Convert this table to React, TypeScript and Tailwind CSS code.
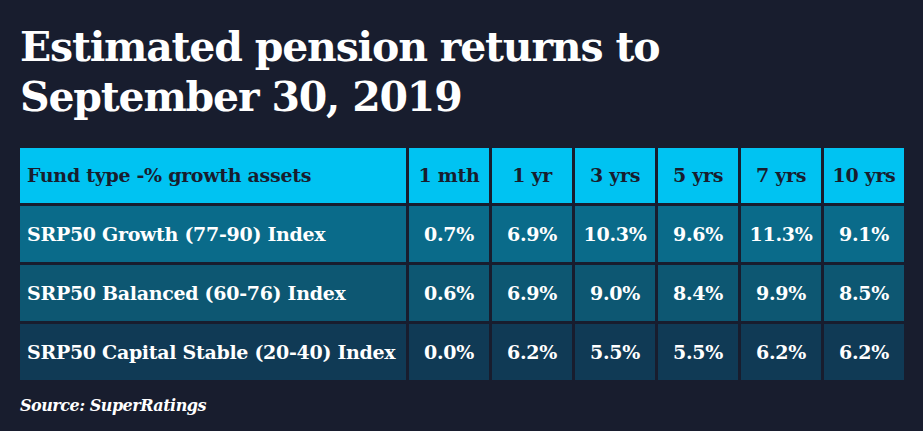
import React from 'react';

const rows = [
  { name: 'SRP50 Growth (77-90) Index', values: ['0.7%', '6.9%', '10.3%', '9.6%', '11.3%', '9.1%'], bg: 'bg-[#0a6b8a]' },
  { name: 'SRP50 Balanced (60-76) Index', values: ['0.6%', '6.9%', '9.0%', '8.4%', '9.9%', '8.5%'], bg: 'bg-[#0d5772]' },
  { name: 'SRP50 Capital Stable (20-40) Index', values: ['0.0%', '6.2%', '5.5%', '5.5%', '6.2%', '6.2%'], bg: 'bg-[#103a55]' },
];

const periods = ['1 mth', '1 yr', '3 yrs', '5 yrs', '7 yrs', '10 yrs'];

export default function App() {
  return (
    <div
      className="w-[923px] h-[431px] bg-[#181d2e] text-white overflow-hidden"
      style={{ fontFamily: '"DejaVu Serif", serif' }}
    >
      <div className="pl-[20px] pr-[20px] pt-[22px]">
        <h1 className="text-[41px] leading-[50px] font-bold tracking-[-1.2px]">
          Estimated pension returns to
          <br />
          September 30, 2019
        </h1>

        <div className="mt-[26px] grid grid-cols-[386px_repeat(6,80px)] gap-[3px] text-[19px] font-bold tracking-[-0.3px]">
          <div className="h-[55px] bg-[#00c3f2] text-[#181d2e] flex items-center pl-[7px]">
            Fund type -% growth assets
          </div>
          {periods.map((p) => (
            <div key={p} className="h-[55px] bg-[#00c3f2] text-[#181d2e] flex items-center justify-center">
              {p}
            </div>
          ))}

          {rows.map((r) => (
            <React.Fragment key={r.name}>
              <div className={`h-[56px] ${r.bg} flex items-center pl-[7px]`}>{r.name}</div>
              {r.values.map((v, i) => (
                <div key={i} className={`h-[56px] ${r.bg} flex items-center justify-center`}>
                  {v}
                </div>
              ))}
            </React.Fragment>
          ))}
        </div>

        <p className="mt-[14px] text-[16px] font-bold italic tracking-[-0.5px]">Source: SuperRatings</p>
      </div>
    </div>
  );
}
